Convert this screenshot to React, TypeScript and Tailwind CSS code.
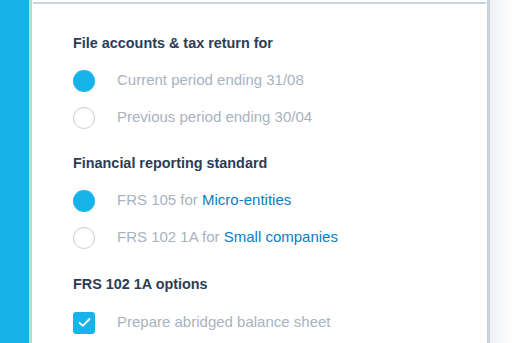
import React from "react";

type Option = { label: string; link?: string; checked: boolean };

const periodOptions: Option[] = [
  { label: "Current period ending 31/08", checked: true },
  { label: "Previous period ending 30/04", checked: false },
];

const standardOptions: Option[] = [
  { label: "FRS 105 for ", link: "Micro-entities", checked: true },
  { label: "FRS 102 1A for ", link: "Small companies", checked: false },
];

function Radio({ checked }: { checked: boolean }) {
  return checked ? (
    <span className="block w-[22px] h-[22px] rounded-full bg-[#17b4ea]" />
  ) : (
    <span className="block w-[22px] h-[22px] rounded-full border-[1.5px] border-[#c6ced8] bg-white" />
  );
}

function OptionRow({ option }: { option: Option }) {
  return (
    <div className="flex items-center h-[37px]">
      <Radio checked={option.checked} />
      <span className="ml-[22px] text-[15px] text-[#a8b3c0]">
        {option.label}
        {option.link && <span className="text-[#0b7cc6]">{option.link}</span>}
      </span>
    </div>
  );
}

function SectionTitle({ children }: { children: React.ReactNode }) {
  return <h3 className="text-[14.4px] font-bold text-[#2b3d55] leading-[18px]">{children}</h3>;
}

export default function App() {
  return (
    <div
      className="flex w-[515px] h-[343px] overflow-hidden bg-white"
      style={{ fontFamily: '"Liberation Sans", Arial, sans-serif' }}
    >
      <div className="w-[29px] shrink-0 bg-[#16b3e8]" />
      <div className="w-[461px] shrink-0 border-x-[3px] border-[#c8d0da] bg-white pt-[2px]">
        <div className="mx-[1px] border-t-2 border-[#cdd4dd]" />
        <div className="pl-[41px] pt-[30px]">
          <SectionTitle>File accounts &amp; tax return for</SectionTitle>
          <div className="mt-[10px]">
            {periodOptions.map((o) => (
              <OptionRow key={o.label} option={o} />
            ))}
          </div>

          <div className="mt-[18px]">
            <SectionTitle>Financial reporting standard</SectionTitle>
          </div>
          <div className="mt-[10px]">
            {standardOptions.map((o) => (
              <OptionRow key={o.label} option={o} />
            ))}
          </div>

          <div className="mt-[19px]">
            <SectionTitle>FRS 102 1A options</SectionTitle>
          </div>
          <div className="mt-[11px] flex items-center h-[37px]">
            <span className="flex items-center justify-center w-[22px] h-[22px] rounded-[3px] bg-[#17b4ea]">
              <svg width="13" height="11" viewBox="0 0 13 11" fill="none">
                <path d="M1.5 5.8 L4.8 8.8 L11.5 2" stroke="white" strokeWidth="1.8" strokeLinecap="round" strokeLinejoin="round" />
              </svg>
            </span>
            <span className="ml-[22px] text-[15px] text-[#a8b3c0]">Prepare abridged balance sheet</span>
          </div>
        </div>
      </div>
      <div className="flex-1 bg-gradient-to-r from-[#eef0f3] to-white" />
    </div>
  );
}
